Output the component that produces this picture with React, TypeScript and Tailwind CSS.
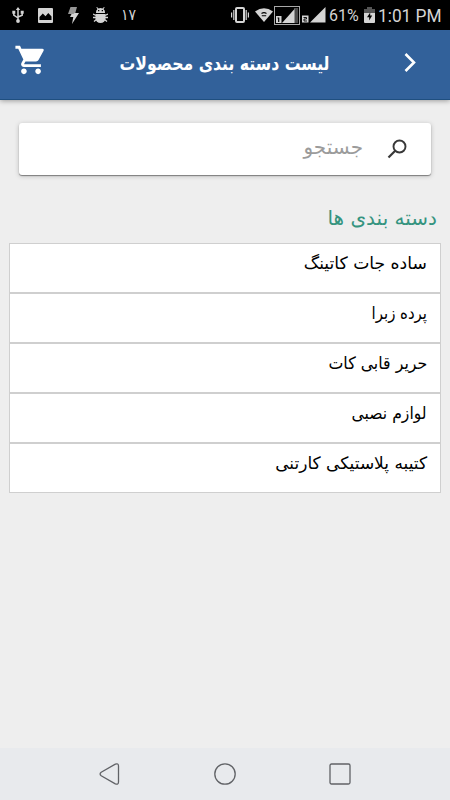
import React from "react";

const categories = [
  { name: "ساده جات کاتینگ", fit: "scale-x-[1.01]" },
  { name: "پرده زبرا", fit: "scale-x-[0.88]" },
  { name: "حریر قابی کات", fit: "scale-x-[0.93]" },
  { name: "لوازم نصبی", fit: "scale-x-[0.92]" },
  { name: "کتیبه پلاستیکی کارتنی", fit: "scale-x-100" },
];

function StatusBar() {
  return (
    <div className="flex h-[30px] items-center bg-black pr-2 pl-3 font-[Roboto,sans-serif] text-[#d4d4d4]">
      <svg className="h-4 w-3" viewBox="0 0 12 16" fill="none" stroke="currentColor" strokeWidth="1.5">
        <path d="M6 2v12M1.8 5v3.2L6 11M10.2 5v3.2L6 10" />
        <path d="M6 0l2.2 3H3.8zM.3 3.800h3v3H.3zM8.700 3.800h3v3h-3z" fill="currentColor" stroke="none" />
        <circle cx="6" cy="14" r="1.9" fill="currentColor" stroke="none" />
      </svg>
      <svg className="ml-3.5 h-[15px] w-[15px]" viewBox="0 0 15 15" fill="currentColor">
        <path fillRule="evenodd" d="M1 0h13a1 1 0 0 1 1 1v13a1 1 0 0 1-1 1H1a1 1 0 0 1-1-1V1a1 1 0 0 1 1-1zm.5 12h12V8.500L10.300 5 7.500 8.300 4.800 5.500 1.500 9z" />
      </svg>
      <svg className="ml-[15px] h-[17px] w-[11px]" viewBox="0 0 11 17">
        <path d="M2.5 0h6.500L7 7H0z" fill="#969696" />
        <path d="M6.500 6H11L4 17l1.300-7H2l1.500-3h2z" fill="currentColor" />
      </svg>
      <svg className="ml-3.5 h-4 w-[15px]" viewBox="0 0 15 16" fill="currentColor">
        <path fillRule="evenodd" d="M3 6a4.5 4.5 0 0 1 1.5-4L3.3.5 4 0l1.5 1.4a5 5 0 0 1 4 0L11 0l.7.5L10.5 2A4.5 4.5 0 0 1 12 6zM5 3v1.3h1.3V3zm3.700 0v1.300H10V3z" />
        <path d="M2.500 7h10v4.500a5 4.500 0 0 1-10 0z" />
        <path d="M0 7l3 1.500M15 7l-3 1.500M0 10.500h15M1 14.500l3-2.500M14 14.500l-3-2.500" stroke="currentColor" strokeWidth="1.3" />
      </svg>
      <span className="ml-[13px] origin-left scale-x-[0.88] font-['DejaVu_Sans',sans-serif] text-[16px] leading-none">۱۷</span>

      <div className="ml-auto flex items-center">
        <svg className="h-4 w-[18px]" viewBox="0 0 18 16" fill="none" stroke="currentColor">
          <rect x="5" y="1" width="8" height="14" rx="1" strokeWidth="2" />
          <path d="M2.8 3v10M15.2 3v10M.6 5.5v5M17.4 5.5v5" strokeWidth="1.2" />
        </svg>
        <svg className="ml-1.5 h-3.5 w-[18px]" viewBox="0 0 18 14">
          <path d="M0 3.5Q9-3 18 3.5L9 14z" fill="currentColor" />
          <path d="M6.500 5.500Q9 3.800 11.500 5.500M6.800 7.800h4.400" fill="none" stroke="black" strokeWidth="1.1" />
        </svg>
        <svg className="ml-px h-[19px] w-[26px]" viewBox="0 0 26 19">
          <rect x=".5" y=".5" width="25" height="18" fill="none" stroke="#a8a8a8" />
          <path d="M20 2h4v15h-4z" fill="#4c4c4c" />
          <path d="M8 17L20.500 3v14z" fill="currentColor" />
          <path d="M2 10h5.500v7H2z" fill="currentColor" />
          <path d="M3.500 12h1.200v4" fill="none" stroke="black" strokeWidth="1.200" />
        </svg>
        <svg className="ml-0.5 h-4 w-[24px]" viewBox="0 0 24 16">
          <path d="M8 15.500L23.500 0v15.500z" fill="currentColor" />
          <path d="M0 8.500h6.500v7H0z" fill="currentColor" />
          <path d="M1.500 10.500h3v1.500h-2.500v2h3" fill="none" stroke="black" strokeWidth=".9" />
        </svg>
        <span className="ml-[3px] w-[31px] text-[16.500px] leading-none whitespace-nowrap">
          <span className="inline-block origin-left translate-y-px scale-x-[0.97]">61%</span>
        </span>
        <svg className="ml-1 h-4 w-[11px]" viewBox="0 0 11 16">
          <path d="M3 0h5v2h3v4H0V2h3z" fill="#555" />
          <path d="M0 6h11v9a1 1 0 0 1-1 1H1a1 1 0 0 1-1-1z" fill="currentColor" />
          <path d="M6.200 5.500L3 10.300h2.200v3.200l3-5H6.200z" fill="black" />
        </svg>
        <span className="ml-[3px] w-[64px] text-[18px] leading-none whitespace-nowrap">
          <span className="inline-block origin-left translate-y-px scale-x-[0.96]">1:01 PM</span>
        </span>
      </div>
    </div>
  );
}

function Header() {
  return (
    <header className="relative flex h-[70px] items-start border-b border-[#1f4f80] bg-[#32619a] text-white shadow-[0_1px_5px_rgba(0,0,0,0.35)]">
      <svg className="mt-[13px] ml-[14px] h-[34px] w-[34px]" viewBox="0 0 24 24" fill="currentColor">
        <path d="M7 18c-1.100 0-1.990.9-1.990 2S5.900 22 7 22s2-.9 2-2-.9-2-2-2zM1 2v2h2l3.600 7.590-1.350 2.450c-.16.28-.25.61-.25.960 0 1.100.9 2 2 2h12v-2H7.420c-.14 0-.25-.11-.25-.25l.03-.12.9-1.630h7.450c.75 0 1.410-.41 1.750-1.030l3.580-6.490A1 1 0 0 0 20 4H5.210l-.94-2H1zm16 16c-1.100 0-1.990.9-1.990 2s.89 2 1.990 2 2-.9 2-2-.9-2-2-2z" />
      </svg>
      <div className="mt-[19px] ml-auto flex" dir="rtl">
        <h1 className="origin-right scale-x-[0.825] text-[19px] leading-[28px] font-bold whitespace-nowrap">لیست دسته بندی محصولات</h1>
      </div>
      <svg className="mt-[22px] mr-[33px] ml-[73px] h-5 w-3.5" viewBox="0 0 14 20" fill="none" stroke="currentColor" strokeWidth="2.600">
        <path d="M2.500 2l8.500 8.500L2.500 19" />
      </svg>
    </header>
  );
}

export default function App() {
  return (
    <div className="flex h-[800px] w-[450px] flex-col overflow-hidden bg-[#eeeeee] font-['DejaVu_Sans',sans-serif]">
      <StatusBar />
      <Header />
      <main className="flex-1">
        <div dir="rtl" className="mx-[19px] mt-[23px] flex h-[52px] items-start rounded-[3px] bg-white shadow-[0_1px_1px_rgba(0,0,0,0.4),0_1px_5px_rgba(0,0,0,0.22)]">
          <svg className="mt-4 mr-6 h-5 w-5" viewBox="0 0 20 20" fill="none" stroke="#383838">
            <circle cx="12.500" cy="7.500" r="6" strokeWidth="1.900" />
            <path d="M8.200 11.800L1.500 18.500" strokeWidth="2.200" />
          </svg>
          <span className="mt-2.5 mr-6 origin-right text-[20px] leading-[28px] text-[#9b9b9b]">جستجو</span>
        </div>
        <h2 dir="rtl" className="mt-[29px] mr-[13px] flex h-7 text-[20px] leading-[28px] text-[#35947f]">
          <span className="origin-right">دسته بندی ها</span>
        </h2>
        <ul dir="rtl" className="mx-[9px] mt-[11px]">
          {categories.map((item) => (
            <li key={item.name} className="flex h-[50px] border border-[#cfcfcf] bg-white pt-[5px] pr-[13px] text-[17px] leading-[28px] text-black">
              <span className={"origin-right whitespace-nowrap " + item.fit}>{item.name}</span>
            </li>
          ))}
        </ul>
      </main>
      <nav className="flex h-[52px] items-start bg-[#e8eaed] pt-[15px] pl-[99px]">
        <svg className="h-[22px] w-[22px]" viewBox="0 0 22 22" fill="none" stroke="#606266" strokeWidth="1.300">
          <path d="M2.200 9.300L16.300 1.200Q19.500 0 19.500 3v16q0 3-3.200 1.800L2.200 12.700Q0 11 2.200 9.300z" />
        </svg>
        <svg className="ml-[93px] h-[22px] w-[22px]" viewBox="0 0 22 22" fill="none" stroke="#606266" strokeWidth="1.300">
          <circle cx="11" cy="11" r="10.200" />
        </svg>
        <svg className="ml-[93px] h-[22px] w-[22px]" viewBox="0 0 22 22" fill="none" stroke="#606266" strokeWidth="1.300">
          <rect x="1" y="1" width="20" height="20" rx="1.500" />
        </svg>
      </nav>
    </div>
  );
}
